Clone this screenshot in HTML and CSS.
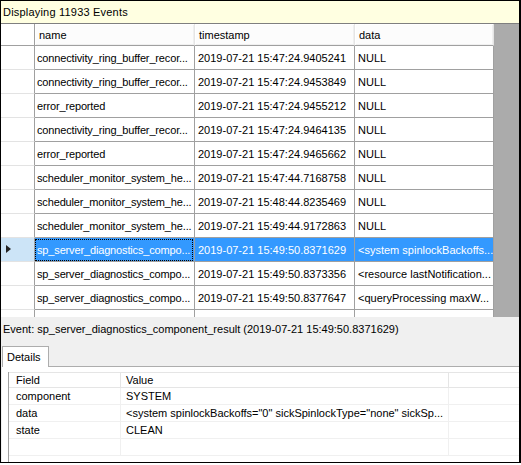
FILE: index.html
```html
<!DOCTYPE html>
<html lang="en">
<head>
    <meta charset="UTF-8">
    <title>Events</title>
    <link rel="stylesheet" href="styles.css">
</head>
<body>
    <div class="frame">
        <div class="infobar">Displaying 11933 Events</div>

        <div class="grid-area">
            <div class="grid">
                <div class="row head">
                    <div class="cell rh"></div>
                    <div class="cell c-name">name</div>
                    <div class="cell c-ts">timestamp</div>
                    <div class="cell c-data">data</div>
                </div>
                <div class="row">
                    <div class="cell rh"></div>
                    <div class="cell c-name">connectivity_ring_buffer_recor...</div>
                    <div class="cell c-ts">2019-07-21 15:47:24.9405241</div>
                    <div class="cell c-data">NULL</div>
                </div>
                <div class="row">
                    <div class="cell rh"></div>
                    <div class="cell c-name">connectivity_ring_buffer_recor...</div>
                    <div class="cell c-ts">2019-07-21 15:47:24.9453849</div>
                    <div class="cell c-data">NULL</div>
                </div>
                <div class="row">
                    <div class="cell rh"></div>
                    <div class="cell c-name">error_reported</div>
                    <div class="cell c-ts">2019-07-21 15:47:24.9455212</div>
                    <div class="cell c-data">NULL</div>
                </div>
                <div class="row">
                    <div class="cell rh"></div>
                    <div class="cell c-name">connectivity_ring_buffer_recor...</div>
                    <div class="cell c-ts">2019-07-21 15:47:24.9464135</div>
                    <div class="cell c-data">NULL</div>
                </div>
                <div class="row">
                    <div class="cell rh"></div>
                    <div class="cell c-name">error_reported</div>
                    <div class="cell c-ts">2019-07-21 15:47:24.9465662</div>
                    <div class="cell c-data">NULL</div>
                </div>
                <div class="row">
                    <div class="cell rh"></div>
                    <div class="cell c-name">scheduler_monitor_system_he...</div>
                    <div class="cell c-ts">2019-07-21 15:47:44.7168758</div>
                    <div class="cell c-data">NULL</div>
                </div>
                <div class="row">
                    <div class="cell rh"></div>
                    <div class="cell c-name">scheduler_monitor_system_he...</div>
                    <div class="cell c-ts">2019-07-21 15:48:44.8235469</div>
                    <div class="cell c-data">NULL</div>
                </div>
                <div class="row">
                    <div class="cell rh"></div>
                    <div class="cell c-name">scheduler_monitor_system_he...</div>
                    <div class="cell c-ts">2019-07-21 15:49:44.9172863</div>
                    <div class="cell c-data">NULL</div>
                </div>
                <div class="row selected">
                    <div class="cell rh"><span class="arrow"></span></div>
                    <div class="cell c-name"><span class="focus">sp_server_diagnostics_compo...</span></div>
                    <div class="cell c-ts">2019-07-21 15:49:50.8371629</div>
                    <div class="cell c-data">&lt;system spinlockBackoffs...</div>
                </div>
                <div class="row">
                    <div class="cell rh"></div>
                    <div class="cell c-name">sp_server_diagnostics_compo...</div>
                    <div class="cell c-ts">2019-07-21 15:49:50.8373356</div>
                    <div class="cell c-data">&lt;resource lastNotification...</div>
                </div>
                <div class="row">
                    <div class="cell rh"></div>
                    <div class="cell c-name">sp_server_diagnostics_compo...</div>
                    <div class="cell c-ts">2019-07-21 15:49:50.8377647</div>
                    <div class="cell c-data">&lt;queryProcessing maxW...</div>
                </div>
                <div class="row">
                    <div class="cell rh"></div>
                    <div class="cell c-name"></div>
                    <div class="cell c-ts"></div>
                    <div class="cell c-data"></div>
                </div>
            </div>
        </div>

        <div class="details">
            <div class="event-label">Event: sp_server_diagnostics_component_result (2019-07-21 15:49:50.8371629)</div>
            <div class="tabs">
                <div class="tab">Details</div>
            </div>
            <div class="tab-page">
                <div class="props">
                    <div class="prow phead">
                        <div class="pcell p-field">Field</div>
                        <div class="pcell p-value">Value</div>
                        <div class="pcell p-rest"></div>
                    </div>
                    <div class="prow">
                        <div class="pcell p-field">component</div>
                        <div class="pcell p-value">SYSTEM</div>
                        <div class="pcell p-rest"></div>
                    </div>
                    <div class="prow">
                        <div class="pcell p-field">data</div>
                        <div class="pcell p-value">&lt;system spinlockBackoffs="0" sickSpinlockType="none" sickSp...</div>
                        <div class="pcell p-rest"></div>
                    </div>
                    <div class="prow">
                        <div class="pcell p-field">state</div>
                        <div class="pcell p-value">CLEAN</div>
                        <div class="pcell p-rest"></div>
                    </div>
                    <div class="prow">
                        <div class="pcell p-field"></div>
                        <div class="pcell p-value"></div>
                        <div class="pcell p-rest"></div>
                    </div>
                </div>
            </div>
        </div>
    </div>
</body>
</html>
```

FILE: styles.css
```css
:root {
    --grid-line: #a0a0a0;
    --head-line: #e5e5e5;
    --dead-area: #ababab;
    --panel-bg: #f0f0f0;
    --select: #3399ff;
}
body {
    margin: 0;
    font-family: "Liberation Sans", Arial, sans-serif;
    font-size: 11px;
    color: #000;
    background: #fff;
}
.frame {
    width: 521px;
    height: 463px;
    box-sizing: border-box;
    border: 1px solid #000;
    border-right-width: 2px;
    display: flex;
    flex-direction: column;
    overflow: hidden;
}
.infobar {
    height: 23px;
    flex: none;
    box-sizing: border-box;
    background: #ffffe1;
    border-bottom: 1px solid #7f7f7f;
    padding-left: 2px;
    display: flex;
    align-items: center;
    letter-spacing: 0.2px;
}

/* event grid */
.grid-area {
    height: 293px;
    flex: none;
    background: var(--dead-area);
    overflow: hidden;
}
.grid {
    width: 493px;
    background: #fff;
}
.row {
    display: flex;
    height: 24px;
}
.row.head {
    height: 22px;
}
.cell {
    box-sizing: border-box;
    border-right: 1px solid var(--grid-line);
    border-bottom: 1px solid var(--grid-line);
    padding-left: 3px;
    display: flex;
    align-items: center;
    white-space: nowrap;
    overflow: hidden;
}
.rh {
    width: 34px;
    border-bottom-color: #e3e3e3;
    position: relative;
}
.c-name {
    width: 160px;
    padding-left: 2px;
    letter-spacing: -0.15px;
}
.c-ts { width: 160px; }
.c-data { width: 139px; }
.head .cell {
    background: #fcfcfc;
    border-right-color: var(--head-line);
    border-bottom-color: var(--grid-line);
    padding-left: 4px;
    letter-spacing: 0;
    box-shadow: inset 1px 1px 0 #fff, inset -1px -1px 0 #f0f0f0;
}
.head .rh {
    background: #fff;
    border-right-color: var(--grid-line);
    box-shadow: none;
}
.selected .cell {
    background: var(--select);
    color: #fff;
}
.selected .rh {
    background: #cce4f7;
}
.selected .c-name {
    padding-left: 1px;
}
.focus {
    display: flex;
    align-items: center;
    height: 20px;
    width: 156px;
    padding-left: 1px;
    box-sizing: border-box;
    outline: 1px dotted #000;
}
.arrow {
    position: absolute;
    left: 5px;
    top: 7px;
    border-left: 5px solid #222;
    border-top: 4px solid transparent;
    border-bottom: 4px solid transparent;
}

/* details pane */
.details {
    flex: 1;
    background: var(--panel-bg);
    display: flex;
    flex-direction: column;
}
.event-label {
    padding: 6px 0 0 2px;
    height: 23px;
}
.tabs {
    display: flex;
    padding-left: 1px;
    height: 21px;
    position: relative;
    z-index: 1;
}
.tab {
    width: 47px;
    box-sizing: border-box;
    background: #fff;
    border: 1px solid #adadad;
    border-bottom: none;
    padding: 4px 0 0 4px;
}
.tab-page {
    flex: 1;
    background: #fff;
    border-top: 1px solid #adadad;
    margin-top: -1px;
    margin-left: 1px;
    padding: 5px 0 0 6px;
}
.props {
    border-left: 1px solid #a0a0a0;
    height: 100%;
    box-sizing: border-box;
}
.prow {
    display: flex;
    height: 17px;
}
.phead {
    height: 16px;
}
.pcell {
    box-sizing: border-box;
    border-right: 1px solid var(--panel-bg);
    border-bottom: 1px solid var(--panel-bg);
    padding-left: 7px;
    display: flex;
    align-items: center;
    white-space: nowrap;
    overflow: hidden;
}
.phead .pcell {
    border-color: var(--head-line);
    border-top: 1px solid var(--head-line);
}
.p-field { width: 112px; }
.p-value { width: 328px; padding-left: 5px; }
.p-rest { flex: 1; border-right: none; }
```
